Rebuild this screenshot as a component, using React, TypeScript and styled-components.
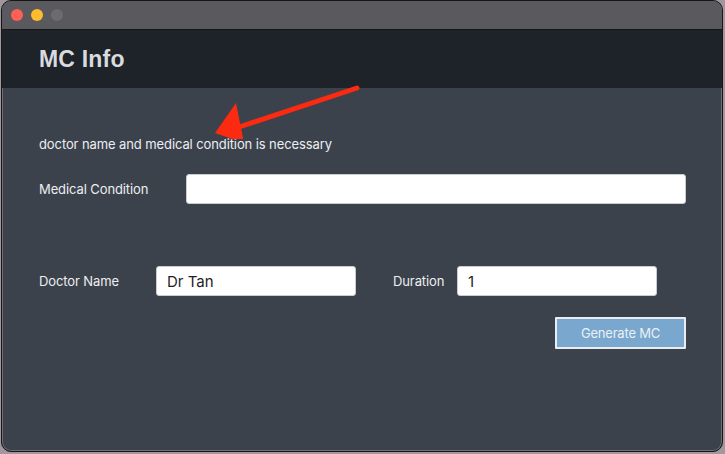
import React from 'react';
import styled, {createGlobalStyle} from 'styled-components';

const GlobalStyle = createGlobalStyle`
    html, body {
        margin: 0;
        padding: 0;
        width: 725px;
        height: 454px;
        overflow: hidden;
        background: #a3969d;
        font-family: Inter, "Liberation Sans", sans-serif;
    }
`;

// Styled Components
const Desktop = styled.div`
    width: 725px;
    height: 454px;
    padding: 0 2px 2px 1px;
    box-sizing: border-box;
    display: flex;
`;

const Window = styled.div`
    flex: 1;
    display: flex;
    flex-direction: column;
    border-radius: 10px;
    border: 1px solid #161719;
    box-shadow: inset 0 0 0 1px #6f6e72;
    overflow: hidden;
    background: #3c424c;
`;

const TitleBar = styled.div`
    height: 28px;
    flex: none;
    display: flex;
    align-items: center;
    gap: 8px;
    padding-left: 9px;
    background: #5a595d;
    border-bottom: 1px solid #161719;
`;

const Light = styled.span<{ $color: string }>`
    width: 12px;
    height: 12px;
    border-radius: 50%;
    background: ${props => props.$color};
`;

const Header = styled.div`
    height: 58px;
    flex: none;
    display: flex;
    align-items: center;
    padding-left: 37px;
    background: #1e2229;
`;

const Title = styled.h1`
    margin: 0;
    font-family: "Liberation Sans", Arial, sans-serif;
    font-size: 23px;
    font-weight: 700;
    color: #d9dbdf;
    letter-spacing: 0.2px;
`;

const Body = styled.div`
    position: relative;
    flex: 1;
    display: flex;
    flex-direction: column;
    padding: 48px 36px 0 37px;
`;

const Message = styled.div`
    font-size: 13px;
    line-height: 16px;
    color: #eceef1;
    letter-spacing: -0.1px;
`;

const Row = styled.div<{ $top: number }>`
    display: flex;
    align-items: center;
    margin-top: ${props => props.$top}px;
`;

const Label = styled.label<{ $width: number }>`
    width: ${props => props.$width}px;
    flex: none;
    font-size: 13px;
    color: #eceef1;
    letter-spacing: -0.1px;
`;

const Field = styled.input<{ $width?: number }>`
    box-sizing: border-box;
    ${props => props.$width ? `width: ${props.$width}px;` : 'flex: 1;'}
    height: 30px;
    border: 1px solid #c9ccd1;
    border-radius: 3px;
    background: #ffffff;
    padding: 0 10px;
    font-family: Inter, "Liberation Sans", sans-serif;
    font-size: 15px;
    color: #1e1e1e;
    outline: none;
`;

const Spacer = styled.div<{ $width: number }>`
    width: ${props => props.$width}px;
    flex: none;
`;

const Actions = styled.div`
    display: flex;
    justify-content: flex-end;
    margin-top: 21px;
`;

const Button = styled.button`
    width: 131px;
    height: 32px;
    box-sizing: border-box;
    border: 2px solid #e9ecf0;
    border-radius: 1px;
    background: #79a7cd;
    color: #eaf0f6;
    font-family: Inter, "Liberation Sans", sans-serif;
    font-size: 13px;
    letter-spacing: -0.2px;
`;

const Arrow = styled.svg`
    position: absolute;
    left: 0;
    top: -29px;
    pointer-events: none;
`;

export default function App() {
    return (
        <>
            <GlobalStyle/>
            <Desktop>
                <Window>
                    <TitleBar>
                        <Light $color="#fe5f57"/>
                        <Light $color="#febc2e"/>
                        <Light $color="#6c6b70"/>
                    </TitleBar>
                    <Header>
                        <Title>MC Info</Title>
                    </Header>
                    <Body>
                        <Message>doctor name and medical condition is necessary</Message>
                        <Row $top={22}>
                            <Label $width={147}>Medical Condition</Label>
                            <Field defaultValue=""/>
                        </Row>
                        <Row $top={62}>
                            <Label $width={117}>Doctor Name</Label>
                            <Field $width={200} defaultValue="Dr Tan"/>
                            <Spacer $width={37}/>
                            <Label $width={64}>Duration</Label>
                            <Field $width={200} defaultValue="1"/>
                        </Row>
                        <Actions>
                            <Button>Generate MC</Button>
                        </Actions>
                        {/* annotation arrow */}
                        <Arrow width="400" height="80" viewBox="0 0 400 80">
                            <line x1="355" y1="29" x2="234" y2="69" stroke="#fc2a10" strokeWidth="5" strokeLinecap="round"/>
                            <polygon points="213,74 234,44 242,84" fill="#fc2a10"/>
                        </Arrow>
                    </Body>
                </Window>
            </Desktop>
        </>
    );
}
